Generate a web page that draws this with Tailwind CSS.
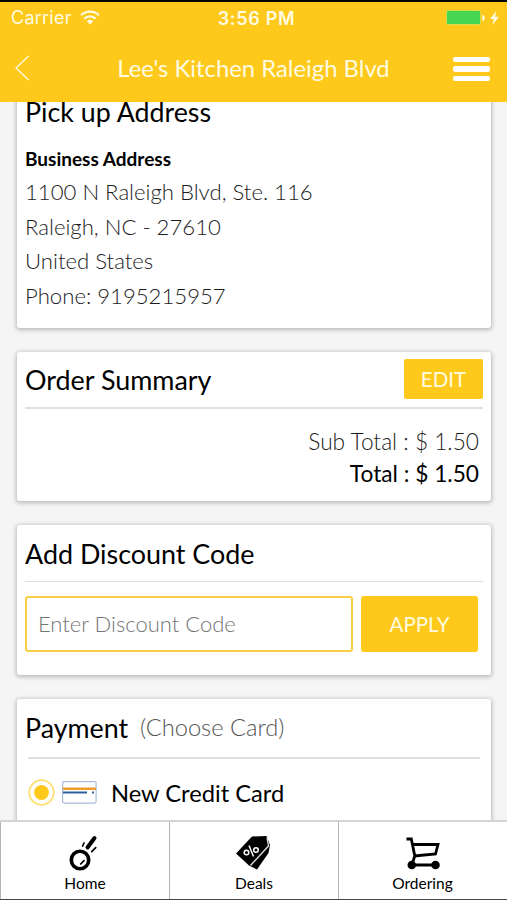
<!DOCTYPE html>
<html lang="en">
<head>
<meta charset="utf-8">
<title>Checkout</title>
<script src="https://cdn.jsdelivr.net/npm/@tailwindcss/browser@4"></script>
</head>
<body class="bg-[#f5f5f5]">
<div class="h-[900px] w-[507px] flex flex-col overflow-hidden bg-[#f5f5f5] font-[Lato,sans-serif] text-black whitespace-nowrap">
  <header class="h-[102px] shrink-0 bg-[#fec91b] border-t-2 border-black text-[#fffbe0] flex flex-col">
    <div class="h-8 grid grid-cols-3 items-center pl-[11px] pr-[8px] font-[Inter,sans-serif]">
      <div class="flex items-center gap-[8px]">
        <span class="text-[18px] tracking-[0.25px]">Carrier</span>
        <svg class="w-[20px] h-[15px]" viewBox="0 0 20 15" fill="none" stroke="currentColor" stroke-width="2.2"><path d="M1 5.2a13 13 0 0 1 18 0M4.2 8.7a8.4 8.4 0 0 1 11.6 0"/><path d="M6.7 11.3a5 5 0 0 1 6.6 0L10 14.6z" fill="currentColor" stroke="none"/></svg>
      </div>
      <span class="text-center text-[18px] font-semibold tracking-[0.7px] pl-[3px] pt-px">3:56 PM</span>
      <div class="flex items-center justify-end">
        <span class="w-[35px] h-[15px] rounded-[2px] bg-[#46d550] border border-[#d9dc4a]"></span>
        <span class="w-[3px] h-[6px] rounded-r-full bg-[#fff3b8] ml-px"></span>
        <svg class="w-[9px] h-[14px] ml-[5px]" viewBox="0 0 9 14" fill="currentColor"><path d="M6.3 0 0 8h3.8L2.500 14 9 5.700H5.200z"/></svg>
      </div>
    </div>
    <div class="h-[70px] flex items-center justify-between pl-[15px] pr-[17px]">
      <svg class="w-[15px] h-[26px]" viewBox="0 0 15 26" fill="none" stroke="currentColor" stroke-width="1.3"><path d="M13.5 1 1 13l12.500 12"/></svg>
      <h1 class="text-[23.850px] leading-[30px] ml-[24px]">Lee's Kitchen Raleigh Blvd</h1>
      <div class="flex flex-col gap-[4px] pt-[3px]">
        <span class="w-[37px] h-[5.500px] rounded-[2px] bg-white"></span>
        <span class="w-[37px] h-[5.500px] rounded-[2px] bg-white"></span>
        <span class="w-[37px] h-[5.500px] rounded-[2px] bg-white"></span>
      </div>
    </div>
  </header>

  <main class="h-[718px] shrink-0 overflow-hidden flex flex-col gap-[24px] px-[17px]">
    <section class="h-[233px] -mt-[7px] shrink-0 bg-white rounded-[3px] shadow-[0_1px_4px_1px_rgba(0,0,0,0.25)] px-[8px] w-[474px]">
      <h2 class="text-[26.800px] leading-[34px]">Pick up Address</h2>
      <h3 class="text-[19px] leading-[24px] font-bold mt-[18px]">Business Address</h3>
      <address class="not-italic font-light text-[22.150px] leading-[34.700px] mt-[4px] text-[#1c1c1c]">1100 N Raleigh Blvd, Ste. 116<br>Raleigh, NC - 27610<br>United States<br>Phone: 9195215957</address>
    </section>

    <section class="h-[149px] shrink-0 bg-white rounded-[3px] shadow-[0_1px_4px_1px_rgba(0,0,0,0.25)] px-[8px] w-[474px]">
      <div class="h-[57px] flex items-center justify-between border-b-2 border-[#e0e0e0]">
        <h2 class="text-[26.900px] leading-[32px]">Order Summary</h2>
        <button class="w-[79px] h-[40px] mb-px rounded-[2px] bg-[#fec91b] text-[#fffbe0] text-[20.500px]">EDIT</button>
      </div>
      <div class="text-right text-[22.700px] leading-[31.500px] pt-[17px] pr-[4px]">
        <p class="font-light text-[#1c1c1c]">Sub Total : $ 1.50</p>
        <p>Total : $ 1.50</p>
      </div>
    </section>

    <section class="h-[150px] shrink-0 bg-white rounded-[3px] shadow-[0_1px_4px_1px_rgba(0,0,0,0.25)] px-[8px] w-[474px]">
      <div class="h-[57px] flex items-center border-b-[1.500px] border-[#dedede]">
        <h2 class="text-[26.900px] leading-[32px] pt-px">Add Discount Code</h2>
      </div>
      <div class="flex gap-[8px] pt-[14px]">
        <input class="w-[328px] h-[56px] border-2 border-[#fbcf45] rounded-[3px] px-[11px] pb-[2px] font-light text-[22px] placeholder:text-[#757575]" placeholder="Enter Discount Code">
        <button class="w-[117px] h-[56px] rounded-[3px] bg-[#fec91b] text-[#fffbe0] text-[20.500px]">APPLY</button>
      </div>
    </section>

    <section class="h-[160px] shrink-0 bg-white rounded-[3px] shadow-[0_1px_4px_1px_rgba(0,0,0,0.25)] px-[8px] w-[474px]">
      <div class="h-[57px] flex items-center gap-[12px]">
        <h2 class="text-[26.800px] leading-[32px]">Payment</h2>
        <span class="font-light text-[23.700px] leading-[32px] pb-px text-[#555]">(Choose Card)</span>
      </div>
      <div class="mx-[3px] h-[2px] mt-px bg-[#e0e0e0]"></div>
      <label class="flex items-center pl-[3px] mt-[17px] h-[32px]">
        <svg class="w-[27px] h-[27px]" viewBox="0 0 27 27"><circle cx="13.500" cy="13.500" r="12.300" fill="#fff" stroke="#ffdf70" stroke-width="1.700"/><circle cx="13.500" cy="13.500" r="7.400" fill="#fec91b"/></svg>
        <svg class="w-[35px] h-[23px] ml-[7px]" viewBox="0 0 35 23"><rect x=".6" y=".6" width="33.500" height="21.500" rx="1.500" fill="#fff" stroke="#a9bed6" stroke-width="1.200"/><path d="M1 7.700h33" stroke="#ee9b28" stroke-width="2.600"/><path d="M1 11.500h24M30 11.500h2" stroke="#315f9c" stroke-width="2"/></svg>
        <span class="text-[23.700px] leading-[30px] ml-[14px] pt-[2px]">New Credit Card</span>
      </label>
    </section>
  </main>

  <nav class="h-[80px] shrink-0 grid grid-cols-[170px_169px_168px] bg-white border-t-2 border-t-[#d4d4d4] border-b border-b-[#444] text-[15.500px] leading-[20px] text-center">
    <a class="flex flex-col items-center border-x border-x-[#b5b5b5] pt-[12px]">
      <svg class="w-[36px] h-[38px]" viewBox="0 0 36 38" fill="none" stroke="#000" stroke-linecap="round"><circle cx="13" cy="26" r="8.700" stroke-width="3.600"/><path d="M20.500 13.500 27.500 4" stroke-width="4"/><path d="M15.700 12 17 9M24.700 17.700l4-4M13.700 30l3.300-3.300" stroke-width="1.700"/></svg>
      <span class="mt-px">Home</span>
    </a>
    <a class="flex flex-col items-center border-r border-r-[#b5b5b5] pt-[12px]">
      <svg class="w-[36px] h-[38px]" viewBox="0 0 36 38"><path d="M0 19.500 16 2.500 30.500 2l3.500 9-1.500 8L21 35.500 13 31.500z" fill="#000"/><path d="M31 3.500 32.500 12 14.500 31.500" fill="none" stroke="#ddd" stroke-width="1.400"/><g fill="none" stroke="#fff" stroke-width="1.500"><circle cx="10.500" cy="18.500" r="2.300"/><circle cx="20" cy="16" r="2.300"/><path d="m13 11.500 4.500 11"/></g></svg>
      <span class="mt-px">Deals</span>
    </a>
    <a class="flex flex-col items-center pt-[12px] pr-px">
      <svg class="w-[36px] h-[38px]" viewBox="0 0 36 38" fill="none" stroke="#000" stroke-width="2.800"><path d="M1.500 5h4.800l3.500 17L6.800 31H31"/><path d="M7.500 10.500H33L30.500 20 9 22"/><circle cx="6.800" cy="31" r="4.300" fill="#000" stroke="none"/><circle cx="30.500" cy="31" r="4.300" fill="#000" stroke="none"/></svg>
      <span class="mt-px">Ordering</span>
    </a>
  </nav>
</div>
</body>
</html>
